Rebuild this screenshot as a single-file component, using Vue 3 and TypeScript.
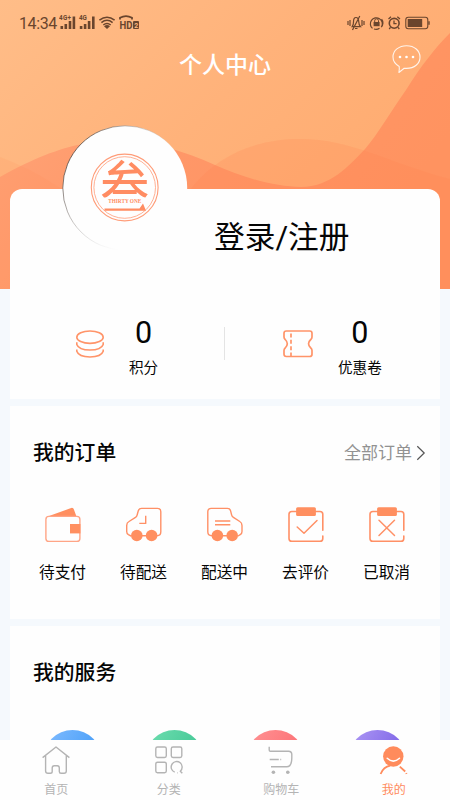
<script setup lang="ts">
interface Entry {
  label: string
  icon: string
}

const orders: Entry[] = [
  { label: '待支付', icon: 'wallet' },
  { label: '待配送', icon: 'waiting' },
  { label: '配送中', icon: 'shipping' },
  { label: '去评价', icon: 'review' },
  { label: '已取消', icon: 'cancelled' },
]

const services: string[] = ['blue', 'green', 'red', 'purple']

const tabs: Entry[] = [
  { label: '首页', icon: 'home' },
  { label: '分类', icon: 'category' },
  { label: '购物车', icon: 'cart' },
  { label: '我的', icon: 'me' },
]
</script>

<template>
  <div class="page">
    <svg class="hero" viewBox="0 0 450 289" aria-hidden="true">
      <defs>
        <linearGradient id="sky" x1="0" y1="0" x2="1" y2="0.65">
          <stop offset="0" stop-color="#ffbd88" />
          <stop offset="0.5" stop-color="#ffb27a" />
          <stop offset="1" stop-color="#ffaa6e" />
        </linearGradient>
        <linearGradient id="wave" x1="0" y1="0" x2="1" y2="0.4">
          <stop offset="0" stop-color="#ffa67a" />
          <stop offset="0.5" stop-color="#ff9768" />
          <stop offset="1" stop-color="#ff9360" />
        </linearGradient>
      </defs>
      <rect width="450" height="289" fill="url(#sky)" />
      <path d="M0 177C34 158 58 149 82 144C132 135 176 147 215 165C244 178 276 187 301 187C330 187 349 166 365 149C378 134 391 111 406 90C421 66 435 48 450 33V289H0Z" fill="url(#wave)" />
      <path d="M190 190C220 151 262 139 300 139C352 139 388 163 450 179V289H190Z" fill="#ff8350" fill-opacity=".2" />
      <path d="M0 157Q30 168 62 189V289H0Z" fill="#ff8852" fill-opacity=".12" />
    </svg>

    <header class="status">
      <span class="time">14:34</span>
      <svg class="signals" width="82" height="18" viewBox="0 0 82 18">
        <g fill="#6a452d">
          <text x="0" y="6.2" font-size="6.3" font-weight="700" textLength="12">4G+</text>
          <rect x="1.5" y="12" width="2.6" height="3" /><rect x="5.5" y="10" width="2.6" height="5" /><rect x="9.7" y="7" width="2.6" height="8" /><rect x="13.6" y="2.5" width="2.6" height="12.5" />
          <text x="20" y="6.2" font-size="6.3" font-weight="700">4G</text>
          <rect x="20.8" y="12" width="2.6" height="3" /><rect x="24.8" y="10" width="2.6" height="5" /><rect x="28.8" y="7" width="2.6" height="8" /><rect x="33" y="2.5" width="2.6" height="12.5" />
          <path d="M45 12.2Q48 9.8 51 12.2L48 15Z" />
          <text x="60.5" y="15" font-size="11" font-weight="700" textLength="13" lengthAdjust="spacingAndGlyphs">HD</text>
        </g>
        <g fill="none" stroke="#6a452d">
          <path d="M40.4 6.2Q48 .2 55.6 6.2M42.4 8.6Q48 4 53.6 8.6M44.3 11Q48 8 51.7 11" stroke-width="1.5" />
          <path d="M61 5.5V3.8Q67 .3 73 3.8V5.5" stroke-width="1.8" />
        </g>
        <rect x="74" y="7" width="6" height="8" rx="1" fill="#6a452d" />
        <text x="75.2" y="13.5" font-size="7" font-weight="700" fill="#ffb981">2</text>
      </svg>
      <svg class="system" width="84" height="16" viewBox="0 0 84 16" fill="none" stroke="#6a452d">
        <path d="M1 6v4M3 5v6M17 6v4M15 5v6M5.2 11.7Q6.5 10 6.5 7Q6.5 2.5 9 2.5Q11.5 2.5 11.8 7Q11.8 10 13.5 11.7ZM12.8 1L5.5 15M8 13.5H10.5" stroke-width="1.2" />
        <path d="M25.5 13.4A6 6 0 1 1 34.7 11.5M34.6 4.2A6 6 0 0 1 34.2 12.2M32.5 13.2A6 6 0 0 1 27 14" stroke-width="1.2" />
        <rect x="26.6" y="7" width="6" height="4.2" fill="#6a452d" stroke="none" /><path d="M27.7 7V5.7a1.9 1.9 0 0 1 3.8 0V7" />
        <circle cx="47.2" cy="8.3" r="4.9" stroke-width="1.6" /><path d="M47 5.5V8.7H49.6M41.5 4L44 1.8M50.3 1.8L53 4M43.5 12.3L42.2 14M51 12.3L52.3 14" stroke-width="1.3" />
        <rect x="58.8" y="2.2" width="22" height="11.6" rx="2.5" stroke-width="1.1" /><rect x="60.7" y="4" width="14.5" height="8" fill="#6a452d" stroke="none" /><path d="M82 6.2v3.6" stroke-width="1.4" />
      </svg>
    </header>

    <div class="titlebar">
      <h1>个人中心</h1>
      <svg class="message" width="30" height="30" viewBox="0 0 30 30">
        <path d="M8.2 22.4C4.2 20.1 2 16.8 2 13C2 6.5 7.8 1.7 15.6 1.7S29 6.6 29 13.2S23.2 24.4 15.6 24.4Q14.3 24.4 13.2 24.2L7.9 28.5Q8.6 25.3 8.2 22.4Z" fill="none" stroke="#fff4ec" stroke-width="1.1" stroke-linejoin="round" />
        <g fill="#fff"><circle cx="9" cy="13" r="1.3" /><circle cx="15.5" cy="13" r="1.3" /><circle cx="22" cy="13" r="1.3" /></g>
      </svg>
    </div>

    <main>
      <section class="card profile">
        <svg class="avatar" width="126" height="126" viewBox="0 0 126 126">
          <defs>
            <linearGradient id="edge" x1="0.1" y1="0.2" x2="0.75" y2="0.6">
              <stop offset="0" stop-color="#52453e" />
              <stop offset="0.65" stop-color="#aaa" stop-opacity=".3" />
              <stop offset="1" stop-color="#fff" stop-opacity="0" />
            </linearGradient>
            <clipPath id="upper"><rect x="36" y="28" width="54" height="44.5" /></clipPath>
          </defs>
          <circle cx="63" cy="63" r="62.2" fill="#fefefe" stroke="url(#edge)" stroke-width=".8" />
          <g fill="none" stroke="#ff9c78"><circle cx="62.7" cy="62.5" r="33.4" stroke-width="1.1" /><circle cx="62.7" cy="62.5" r="30.8" stroke-width=".8" /></g>
          <g clip-path="url(#upper)"><text class="mark" x="0" y="0" transform="translate(62.7 86.5) scale(1 1.26)" text-anchor="middle">叁</text></g>
          <text class="brand" x="62.7" y="78" text-anchor="middle" textLength="33" lengthAdjust="spacingAndGlyphs">THIRTY ONE</text>
          <path d="M42.5 83.5H77.5L81 78.5L84 85.7H42.5Z" fill="#ff8c62" />
        </svg>
        <div class="login">登录/注册</div>
        <div class="stats">
          <div class="stat points">
            <svg width="30" height="30" viewBox="0 0 30 30" fill="none" stroke="#ff9469" stroke-width="1.6">
              <ellipse cx="15" cy="8.2" rx="13.2" ry="6.2" />
              <path d="M1.8 13.2V15.4C3 18.8 8 21 15 21S27 18.8 28.2 15.4V13.2M1.8 20.4V22.3C3 25.8 8 28 15 28S27 25.8 28.2 22.3V20.4" />
            </svg>
            <div><strong>0</strong><span>积分</span></div>
          </div>
          <div class="stat coupon">
            <svg width="32" height="30" viewBox="0 0 32 30" fill="none" stroke="#ff9469" stroke-width="1.7">
              <path d="M4.3 2H27.7Q30 2 30 4.3V8Q30 9.6 28.8 10.5C25.8 13.2 25.8 16.3 28.8 19Q30 20 30 21.5V25.2Q30 27.5 27.7 27.5H4.3Q2 27.5 2 25.2V21.5Q2 20 3.2 19C6 16.3 6 13.2 3.2 10.5Q2 9.6 2 8V4.3Q2 2 4.3 2Z" />
              <path d="M9 3V27" stroke-dasharray="4 2.4" stroke-dashoffset="-1.4" />
            </svg>
            <div><strong>0</strong><span>优惠卷</span></div>
          </div>
        </div>
      </section>

      <section class="card orders">
        <div class="heading">
          <h2>我的订单</h2>
          <div class="all">
            <span>全部订单</span>
            <svg width="10" height="16" viewBox="0 0 10 16"><path d="M1.3 1.3L8.2 8L1.3 14.7" fill="none" stroke="#555" stroke-width="1.2" /></svg>
          </div>
        </div>
        <div class="order-grid">
          <div v-for="item in orders" :key="item.icon" class="order">
            <svg width="40" height="40" viewBox="0 0 40 40" fill="none" stroke="#ff9066" stroke-width="1.4" stroke-linecap="round" stroke-linejoin="round">
              <template v-if="item.icon === 'wallet'">
                <path d="M6 11L27.5 3.2Q30.2 2 31 4.7L33.3 11Z" fill="#ff8f60" stroke="none" />
                <rect x="2.9" y="11.4" width="34" height="25" rx="3" stroke="#ffa586" />
                <rect x="27" y="19" width="10.4" height="9.4" fill="#ff8f60" stroke="none" />
              </template>
              <template v-else-if="item.icon === 'waiting'">
                <path d="M7 31L4.4 29.7Q2.7 28.7 2.7 26.4V20.4Q2.7 17.7 5 16.5L11.5 12.4Q12.8 11.5 13.2 9.8L14.3 5.8Q15 3.4 17.5 3.4H33.5Q36.8 3.4 36.8 6.8V26.8Q36.8 30.7 33 30.7M18 30.7H22" />
                <path d="M21.7 11.4V18.4H16" stroke-linecap="square" />
                <g fill="#ff8f60" stroke="none"><circle cx="12.8" cy="30.5" r="5.8" /><circle cx="27.6" cy="30.5" r="5.8" /></g>
              </template>
              <template v-else-if="item.icon === 'shipping'">
                <path d="M7 30.7Q2.8 30.7 2.8 26.8V6.8Q2.8 3.4 6.2 3.4H22.5Q25 3.4 25.6 5.8L26.6 9.8Q27 11.5 28.4 12.4L34.8 16.5Q37 17.8 37 20.4V26.4Q37 28.7 35.2 29.7L33 31M18 30.7H22" />
                <path d="M10.7 16H24.6M10.7 19.8H24.6" stroke-linecap="square" />
                <g fill="#ff8f60" stroke="none"><circle cx="12.4" cy="30.5" r="5.8" /><circle cx="27.2" cy="30.5" r="5.8" /></g>
              </template>
              <template v-else>
                <path d="M10.3 6.5H5.8Q3 6.5 3 9.3V33.4Q3 36.3 5.8 36.3H34Q36.8 36.3 36.8 33.4V31M36.8 25.2V9.3Q36.8 6.5 34 6.5H29.5" stroke-width="1.6" />
                <rect x="10.1" y="2.2" width="19.8" height="8.8" rx="1.5" fill="#ff8f60" stroke="none" />
                <path v-if="item.icon === 'review'" d="M11.2 22L18 28.3L31 15.5" stroke-width="1.5" />
                <path v-else d="M12 15.3L27.5 30.5M27.5 15.3L12 30.5" stroke-width="1.5" />
              </template>
            </svg>
            <span>{{ item.label }}</span>
          </div>
        </div>
      </section>

      <section class="card services">
        <h2>我的服务</h2>
        <div class="service-grid">
          <i v-for="color in services" :key="color" class="service" :class="color"></i>
        </div>
      </section>
    </main>

    <nav class="tabbar">
      <div v-for="tab in tabs" :key="tab.icon" class="tab" :class="{ active: tab.icon === 'me' }">
        <svg width="30" height="30" viewBox="0 0 30 30" fill="none" stroke="currentColor" stroke-width="1.4" stroke-linejoin="round">
          <template v-if="tab.icon === 'home'">
            <path d="M1.6 12.6L15 2L28.4 12.6M4.6 10.6V26Q4.6 28.3 7 28.3H9.4Q11.2 28.3 11.2 26.5V23Q11.2 20.7 13.2 20.7H16.3Q18.3 20.7 18.3 23V26.5Q18.3 28.3 20 28.3H23Q25.3 28.3 25.3 26V10.6" />
          </template>
          <template v-else-if="tab.icon === 'category'">
            <rect x="1.8" y="2" width="10.5" height="10.5" rx="1.7" /><rect x="17.3" y="2" width="10.5" height="10.5" rx="1.7" /><rect x="1.8" y="17.3" width="10.5" height="10.5" rx="1.7" />
            <path d="M20.7 27.2A5.5 5.5 0 1 1 26.3 26.2L28.3 28.3M23.2 27.9H23.8" />
          </template>
          <template v-else-if="tab.icon === 'cart'">
            <path d="M3.2 1.8V5Q3.2 6.2 4.4 6.2H22.5Q25.8 6.2 25.8 9.5V13C25.8 18.5 24.7 21.8 20.7 21.8H5M3.7 14.5H12.8M14.3 14.5H15.2" />
            <g fill="currentColor" stroke="none"><circle cx="7.4" cy="27.3" r="1.8" /><circle cx="21.8" cy="27.3" r="1.8" /></g>
          </template>
          <template v-else>
            <circle cx="14.3" cy="11.5" r="10.2" fill="currentColor" stroke="none" />
            <path d="M8.2 13.3Q14.3 19 20.5 13.3" stroke="#fff" stroke-width="1.5" stroke-linecap="round" />
            <path d="M1.6 29C3.3 24.8 6.5 21.5 11.2 20.7M20.8 21.6L26.2 26.5M27.2 28L27.6 28.9" stroke-width="1.8" />
          </template>
        </svg>
        <span>{{ tab.label }}</span>
      </div>
    </nav>
  </div>
</template>

<style>
body {
  margin: 0;
}
</style>

<style scoped>
.page {
  position: relative;
  display: flex;
  flex-direction: column;
  width: 450px;
  height: 800px;
  overflow: hidden;
  background: #f5f9fd;
  color: #050505;
  font-family: Roboto, "Noto Sans CJK SC", sans-serif;
}

svg {
  display: block;
  flex: none;
}

h1,
h2 {
  margin: 0;
}

.hero {
  position: absolute;
  top: 0;
  left: 0;
  width: 450px;
  height: 289px;
}

.status {
  position: relative;
  display: flex;
  align-items: center;
  box-sizing: border-box;
  height: 46px;
  padding: 0 19px;
}

.time {
  width: 40px;
  padding-top: 1px;
  color: #6a452d;
  font-size: 16px;
  line-height: 20px;
  letter-spacing: -0.4px;
}

.system {
  margin-left: auto;
}

.titlebar {
  position: relative;
  display: grid;
  grid-template-columns: 1fr auto 1fr;
  align-items: center;
  height: 38px;
  padding: 0 29px;
}

h1 {
  grid-column: 2;
  padding-top: 2px;
  color: #fff;
  font-size: 23px;
  font-weight: 500;
  line-height: 34px;
}

.message {
  align-self: start;
  justify-self: end;
  margin-top: -2px;
}

main {
  position: relative;
  display: flex;
  flex: 1;
  flex-direction: column;
  gap: 7px;
  min-height: 0;
  padding: 105px 10px 0;
}

.card {
  flex: none;
  box-sizing: border-box;
  background: #fefefe;
}

.profile {
  position: relative;
  height: 210px;
  padding-top: 26px;
  border-radius: 12px 12px 0 0;
}

.avatar {
  position: absolute;
  top: -64px;
  left: 52px;
}

.mark {
  fill: #ff8c62;
  font-family: "Noto Sans CJK SC", sans-serif;
  font-size: 49px;
  font-weight: 400;
}

.brand {
  fill: #ff8c62;
  font-family: "Liberation Serif", serif;
  font-size: 5.5px;
  font-weight: 700;
}

.login {
  padding-left: 204px;
  font-size: 30.7px;
  line-height: 46px;
}

.stats {
  display: grid;
  grid-template-columns: 1fr 1fr;
  margin-top: 53px;
}

.stat {
  display: flex;
  align-items: flex-start;
}

.stat > svg {
  margin-top: 15px;
}

.stat > div {
  display: flex;
  flex-direction: column;
  align-items: center;
}

.stat strong {
  padding-top: 1px;
  font-size: 30.5px;
  font-weight: 400;
  line-height: 36px;
}

.stat span {
  margin-top: 6px;
  font-size: 14.6px;
  line-height: 22px;
}

.points {
  padding-left: 65px;
  gap: 24px;
}

.coupon {
  position: relative;
  padding-left: 57px;
  gap: 24px;
}

.coupon::before {
  position: absolute;
  top: 13px;
  left: -1px;
  width: 1px;
  height: 33px;
  background: #e4e4e4;
  content: "";
}

.orders {
  height: 213px;
  padding: 32px 12px 0;
}

h2 {
  padding-left: 11px;
  font-size: 20.8px;
  font-weight: 500;
  line-height: 30px;
}

.heading {
  display: flex;
  align-items: center;
  justify-content: space-between;
}

.heading .all {
  display: flex;
  align-items: center;
  gap: 4px;
  padding-right: 2px;
  color: #929292;
  font-size: 17px;
  line-height: 26px;
}

.order-grid {
  display: grid;
  grid-template-columns: repeat(5, 81px);
  margin-top: 37px;
}

.order {
  display: flex;
  flex-direction: column;
  align-items: center;
}

.order span {
  margin-top: 16px;
  font-size: 15.7px;
  line-height: 24px;
}

.services {
  height: 200px;
  padding: 32px 12px 0;
}

.service-grid {
  display: grid;
  grid-template-columns: repeat(4, 1fr);
  justify-items: center;
  margin-top: 42px;
}

.service {
  width: 59px;
  height: 59px;
  border-radius: 50%;
}

.blue {
  background: linear-gradient(120deg, #83bdff, #2f91f5);
}

.green {
  background: linear-gradient(120deg, #70dfb1, #32bd8a);
}

.red {
  background: linear-gradient(120deg, #ff9495, #fb6268);
}

.purple {
  background: linear-gradient(120deg, #b09bf5, #684de0);
}

.tabbar {
  position: relative;
  display: grid;
  flex: none;
  grid-template-columns: repeat(4, 1fr);
  height: 60px;
  background: #fefefe;
}

.tab {
  display: flex;
  flex-direction: column;
  align-items: center;
  padding-top: 5px;
  color: #b4b4b4;
}

.tab span {
  margin-top: 6px;
  font-size: 12px;
  line-height: 18px;
}

.tab.active {
  color: #ff8b5c;
}
</style>
